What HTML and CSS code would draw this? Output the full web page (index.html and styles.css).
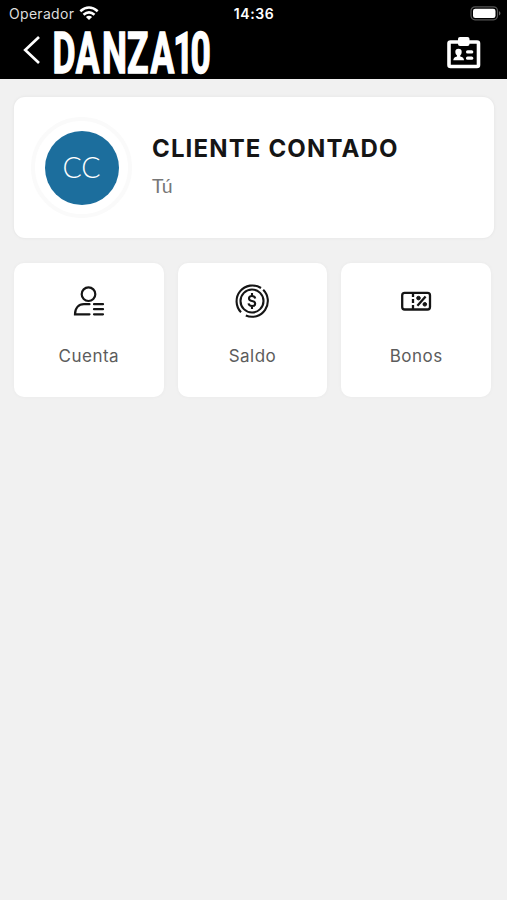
FILE: index.html
```html
<!DOCTYPE html>
<html lang="es">
<head>
<meta charset="utf-8">
<title>Danza10</title>
<link rel="stylesheet" href="styles.css">
</head>
<body>
<header class="top">
  <div class="status">
    <div class="carrier"><span>Operador</span>
      <svg width="20" height="15" viewBox="0 0 20 15" fill="none" stroke="#fff" stroke-width="2.6"><path d="M1.3 5.2Q10-2.2 18.7 5.2M4.5 8.7Q10 4 15.5 8.7"/><path d="M6.9 10.9Q10 8.5 13.1 10.9L10 14Z" fill="#fff" stroke="none"/></svg>
    </div>
    <time class="time">14:36</time>
    <svg class="battery" width="31" height="15" viewBox="0 0 31 15"><rect x="1" y=".8" width="26.5" height="13" rx="4" fill="none" stroke="#555" stroke-width="1.2"/><rect x="3" y="2.7" width="22.5" height="9.3" rx="2.3" fill="#fff"/><path d="M29 5q3 2.3 0 4.6z" fill="#666"/></svg>
  </div>
  <nav class="nav">
    <svg class="back" width="18" height="28" viewBox="0 0 18 28" fill="none" stroke="#fff" stroke-width="2.7"><path d="M16 1L2.2 14L16 27"/></svg>
    <svg class="logo" width="164" height="50" viewBox="0 0 164 50"><text class="logo-text" transform="translate(1 45.6) scale(.61 1)" x="-1 37.5 80.5 121.5 160 197 225.5">DANZA10</text></svg>
    <svg class="badge" width="34" height="32" viewBox="0 0 34 32"><rect x="2" y="5" width="29.5" height="24.5" rx="1.5" fill="none" stroke="#fff" stroke-width="3.6"/><g fill="#fff"><rect x="11" y="0" width="11.5" height="9" rx="2"/><path d="M8.3 15a3.2 3.2 0 0 1 6.4 0q0 2-1.5 3.5v1q3.8.8 3.8 3.8H6.3q0-3 3.7-3.8v-1Q8.3 17 8.3 15Z"/><rect x="19" y="13.2" width="7.3" height="3.3" rx="1.6"/><rect x="19" y="19.5" width="7.3" height="3.3" rx="1.6"/></g></svg>
  </nav>
</header>
<main>
  <section class="profile">
    <div class="ring"><div class="avatar"><span>CC</span></div></div>
    <div class="who"><h1 class="name">CLIENTE CONTADO</h1><p class="role">Tú</p></div>
  </section>
  <section class="tiles">
    <a class="tile">
      <svg width="36" height="36" viewBox="0 0 36 36" fill="none" stroke="#151515" stroke-width="2.2" stroke-linecap="round"><circle cx="17.5" cy="11.2" r="6.8"/><path d="M18.5 21.2H13C7.5 21.2 4 25 4 31.3H18.5"/><path d="M23 21.2h9M23 26.2h9M23 31.3h9"/></svg>
      <span class="label">Cuenta</span>
    </a>
    <a class="tile">
      <svg width="36" height="36" viewBox="0 0 36 36" fill="none" stroke="#151515" stroke-width="2.1"><circle cx="18" cy="18" r="11.5"/><path d="M7 29.2A15.8 15.8 0 0 1 27 5M29.2 6.8A15.8 15.8 0 0 1 11.8 32.5"/><path d="M18 10v3M18 23v3M21.3 15.5Q20.5 13 18 13q-3 0-3 2.5Q15 17.5 18 18q3.2.5 3.2 2.7Q21.2 23 18 23q-3 0-3.5-2.6"/></svg>
      <span class="label">Saldo</span>
    </a>
    <a class="tile">
      <svg width="36" height="36" viewBox="0 0 36 36" fill="none" stroke="#151515" stroke-width="2.3"><rect x="4.2" y="9.9" width="27.8" height="16.6" rx="2.5"/><path d="M15 10v4M15 16v4M15 22v4"/><path d="M27.6 13.5L19.4 22.7"/><circle cx="20.5" cy="15.1" r="1.8" fill="#151515" stroke-width="1"/><circle cx="26.8" cy="21.3" r="1.8" fill="#151515" stroke-width="1"/></svg>
      <span class="label">Bonos</span>
    </a>
  </section>
</main>
</body>
</html>
```
FILE: styles.css
```css
* { box-sizing: border-box; }
body { margin: 0; min-height: 900px; background: #f1f1f1; font-family: Inter, "Liberation Sans", sans-serif; color: #151515; }
svg { display: block; flex: none; overflow: visible; }
.top { height: 79px; background: #000; color: #fff; }
.status { height: 27px; padding: 0 6px 0 9px; display: grid; grid-template-columns: 1fr auto 1fr; align-items: center; }
.carrier { display: flex; align-items: center; gap: 5px; font-size: 14px; letter-spacing: .3px; color: #ddd; }
.time { margin-right: 2px; font-size: 14px; font-weight: 600; letter-spacing: .6px; }
.battery { justify-self: end; }
.nav { height: 52px; padding: 0 27px 0 23px; display: flex; align-items: flex-start; }
.back { margin-top: 9px; }
.logo { margin-left: 11px; }
.logo-text { font: 700 58px Roboto, sans-serif; fill: #fff; stroke: #fff; stroke-width: 1.5px; }
.badge { margin: 10px -1px 0 auto; }
.profile { margin: 18px 13px 0 14px; height: 141px; padding: 0 17px; display: flex; align-items: center; background: #fff; border-radius: 11px; box-shadow: 0 0 2px 1px #e9e9e9; }
.ring { width: 101px; height: 101px; display: grid; place-items: center; border: 4px solid #fafafa; border-radius: 50%; }
.avatar { width: 74px; height: 74px; padding-bottom: 2px; display: grid; place-items: center; border-radius: 50%; background: #1c6e9d; color: #fff; font: 300 28.5px Lato, sans-serif; }
.who { margin: -2px 0 0 20px; }
.name { margin: 0; font-size: 24px; line-height: 30px; font-weight: 700; letter-spacing: 1.15px; white-space: nowrap; }
.role { margin: 8px 0 0; font: 400 19.5px/28px Lato, sans-serif; letter-spacing: .3px; color: #777; }
.tiles { margin: 25px 16px 0 14px; display: grid; grid-template-columns: repeat(3, 1fr); gap: 14px; }
.tile { height: 134px; padding-top: 20px; display: flex; flex-direction: column; align-items: center; background: #fff; border-radius: 10px; box-shadow: 0 0 2px 1px #ededed; }
.label { margin-top: 26px; font-size: 17px; line-height: 22px; letter-spacing: .5px; color: #5c5c5c; }
```
